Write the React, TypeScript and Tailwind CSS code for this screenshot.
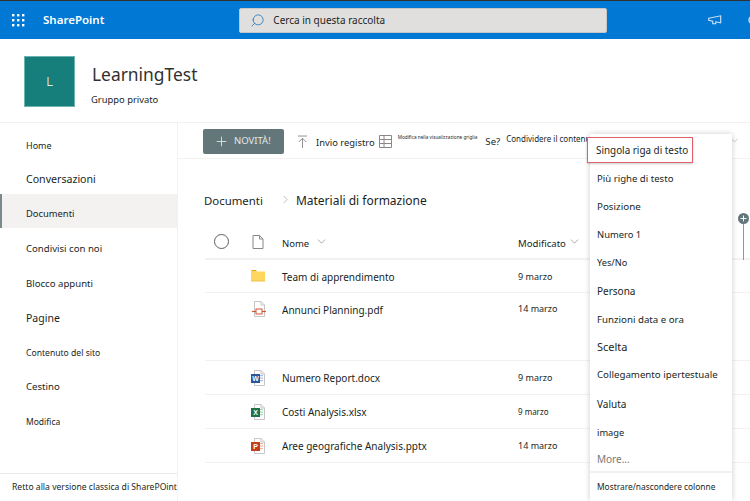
import { ChevronDown, ChevronRight, Plus, Search } from 'lucide-react';

const font = { fontFamily: '"Noto Sans", "Open Sans", sans-serif' };

const navItems = [
  { label: 'Home', size: 'text-[9px]', h: 'h-[34px]' },
  { label: 'Conversazioni', size: 'text-[10.6px]', h: 'h-[34px]' },
  { label: 'Documenti', size: 'text-[9.4px]', h: 'h-[34px]', active: true },
  { label: 'Condivisi con noi', size: 'text-[9.6px]', h: 'h-[36px]' },
  { label: 'Blocco appunti', size: 'text-[9.6px]', h: 'h-[34px]' },
  { label: 'Pagine', size: 'text-[10.5px]', h: 'h-[35px]' },
  { label: 'Contenuto del sito', size: 'text-[8.6px]', h: 'h-[35px]' },
  { label: 'Cestino', size: 'text-[9.6px]', h: 'h-[33px]' },
  { label: 'Modifica', size: 'text-[8.5px]', h: 'h-[37px]' },
];

const menuItems = [
  { label: 'Più righe di testo', size: 'text-[9.6px]', h: 'h-[28px]' },
  { label: 'Posizione', size: 'text-[9.8px]', h: 'h-[28px]' },
  { label: 'Numero 1', size: 'text-[9.4px]', h: 'h-[28px]' },
  { label: 'Yes/No', size: 'text-[9.2px]', h: 'h-[28px]' },
  { label: 'Persona', size: 'text-[10px]', h: 'h-[29px]' },
  { label: 'Funzioni data e ora', size: 'text-[9.7px]', h: 'h-[28px]' },
  { label: 'Scelta', size: 'text-[11px]', h: 'h-[27px]' },
  { label: 'Collegamento ipertestuale', size: 'text-[9.7px]', h: 'h-[29px]' },
  { label: 'Valuta', size: 'text-[10px]', h: 'h-[28px]' },
  { label: 'image', size: 'text-[9.3px]', h: 'h-[30px]' },
];

function AppGrid() {
  const dots = [];
  for (let y = 0; y < 3; y++) {
    for (let x = 0; x < 3; x++) {
      dots.push(<rect key={`${x}-${y}`} x={x * 5} y={y * 5} width="2.4" height="2.4" fill="#fff" />);
    }
  }
  return (
    <svg width="13" height="13" viewBox="0 0 13 13">
      {dots}
    </svg>
  );
}

function FolderIcon() {
  return (
    <svg width="14" height="12" viewBox="0 0 14 12">
      <path d="M0 1.5C0 .7.5 0 1.2 0h3.6l1.4 1.5H0z" fill="#e8a800" />
      <rect x="0" y="1.5" width="14" height="9.5" fill="#ffd75e" />
      <rect x="0" y="10.5" width="14" height="1" fill="#f2c04a" />
    </svg>
  );
}

function FileShape({ children }: { children?: React.ReactNode }) {
  return (
    <svg className="translate-x-[1px]" width="16" height="16" viewBox="0 0 16 16">
      <path d="M3.5 .5h6.5l3.5 3.5v11.5h-10z" fill="#fff" stroke="#c8c6c4" />
      <path d="M10 .5v3.5h3.5" fill="none" stroke="#c8c6c4" />
      {children}
    </svg>
  );
}

function PdfIcon() {
  return (
    <FileShape>
      <path d="M1 10.5h14" stroke="#d65532" strokeWidth="1.2" />
      <rect x="5" y="8" width="6" height="5" fill="#fff" stroke="#d65532" />
    </FileShape>
  );
}

function OfficeIcon({ color, bars, letter }: { color: string; bars: string; letter: string }) {
  return (
    <FileShape>
      <rect x="9" y="5" width="3" height="1.2" fill={bars} />
      <rect x="9" y="7.5" width="3" height="1.2" fill={bars} />
      <rect x="9" y="10" width="3" height="1.2" fill={bars} />
      <rect x="0" y="4" width="9" height="9" fill={color} />
      <text x="4.5" y="11" textAnchor="middle" fontSize="7" fontWeight="700" fill="#fff" fontFamily="Liberation Sans, sans-serif">
        {letter}
      </text>
    </FileShape>
  );
}

function Row({ h, icon, name, date, nameSize = 'text-[10px]', dateSize = 'text-[9px]', pt = 'items-center' }: {
  h: string; icon: React.ReactNode; name: string; date: string; nameSize?: string; dateSize?: string; pt?: string;
}) {
  return (
    <div className={`${h} flex ${pt} border-b border-[#f3f2f1]`}>
      <div className="w-[38px] shrink-0" />
      <div className="w-[39px] shrink-0 pr-[9px] flex justify-center">{icon}</div>
      <div className={`w-[236px] shrink-0 pt-[2px] text-[#201f1e] ${nameSize}`}>{name}</div>
      <div className={`pt-[1px] text-[#201f1e] ${dateSize}`}>{date}</div>
    </div>
  );
}

export default function App() {
  return (
    <div className="relative w-[750px] h-[501px] overflow-hidden bg-white text-[#201f1e]" style={font}>
      {/* suite bar */}
      <div className="h-[39px] bg-[#0078d4] border-t border-[#323130] flex items-center relative">
        <div className="w-[43px] pl-[12px] flex items-center"><AppGrid /></div>
        <span className="text-white text-[11.5px] font-semibold">SharePoint</span>
        <div className="ml-[135px] w-[368px] h-[25px] bg-[#e1dfdd] rounded-[2px] border border-[#c8c6c4] flex items-center pl-[10px] gap-[8px]">
          <Search size={15} strokeWidth={1.2} className="text-[#106ebe] -scale-x-100" />
          <span className="text-[10px] text-[#201f1e]">Cerca in questa raccolta</span>
        </div>
        <div className="absolute left-[708px] top-[14px]">
          <svg width="14" height="10" viewBox="0 0 14 10" fill="none" stroke="#cfe4f7" strokeWidth="1.1">
            <path d="M.7 3.2l12-2.4v7l-5-1v2h-3v-2.6L.7 5.2z" />
          </svg>
        </div>
        <div className="absolute left-[746px] top-[12px]">
          <svg width="14" height="14" viewBox="0 0 14 14" fill="none" stroke="#cfe4f7" strokeWidth="1.4">
            <circle cx="7" cy="7" r="4" />
          </svg>
        </div>
      </div>

      {/* site header */}
      <div className="h-[84px] flex items-start border-b border-[#f3f2f1]">
        <div className="ml-[24px] mt-[17px] w-[51px] h-[51px] bg-[#167f7b] border border-[#6eb3b0] flex items-center justify-center text-white text-[13px] font-light">
          L
        </div>
        <div className="ml-[17px] mt-[23px]">
          <div className="text-[17.4px] leading-[24px] text-[#323130]">LearningTest</div>
          <div className="text-[9.4px] mt-[7px] leading-[13px] -ml-[1px]">Gruppo privato</div>
        </div>
      </div>

      <div className="flex h-[378px]">
        {/* left nav */}
        <div className="w-[178px] shrink-0 border-r border-[#f3f2f1] flex flex-col pt-[3px]">
          {navItems.map((item) => (
            <div
              key={item.label}
              className={`${item.h} flex items-center pt-[6px] ${item.size} ${item.active ? 'bg-[#f3f2f1] border-l-2 border-[#7a8a8c] pl-[24px]' : 'pl-[26px]'}`}
            >
              {item.label}
            </div>
          ))}
          <div className="mt-auto h-[28px] border-t border-[#edebe9] flex items-center pl-[12px] text-[8.6px] whitespace-nowrap">
            Retto alla versione classica di SharePOint
          </div>
        </div>

        {/* main */}
        <div className="flex-1 min-w-0">
          {/* command bar */}
          <div className="h-[36px] pt-[2px] border-b border-[#f3f2f1] flex items-center pl-[25px] whitespace-nowrap">
            <div className="w-[81px] h-[25px] bg-[#63777b] rounded-[2px] flex items-center pl-[11px] gap-[5px] text-[#e4e8e8] text-[9.5px]">
              <Plus size={15} strokeWidth={1.4} />
              <span>NOVITÀ!</span>
            </div>
            <svg className="ml-[13px]" width="11" height="14" viewBox="0 0 12 15" fill="none" stroke="#8a8886" strokeWidth="1">
              <path d="M1 1h10M6 14V3.5M2 7.5l4-4 4 4" />
            </svg>
            <span className="ml-[8px] text-[9.4px] translate-y-[2px]">Invio registro</span>
            <svg className="ml-[4px]" width="13" height="13" viewBox="0 0 13 13" fill="none" stroke="#8a8886" strokeWidth="1">
              <path d="M.5.5h12v12H.5zM.5 4.5h12M.5 8.5h12M5 .5v12" />
            </svg>
            <span className="ml-[6px] text-[4.7px] -translate-y-[4px]">Modifica nella visualizzazione griglia</span>
            <span className="ml-[8px] text-[9.6px] translate-y-[1px]">Se?</span>
            <span className="ml-[6px] text-[8px] -translate-y-[3px]">Condividere il contenuto</span>
          </div>

          {/* breadcrumb */}
          <div className="h-[66px] flex items-center pl-[26px] pt-[18px]">
            <span className="text-[11.4px]">Documenti</span>
            <ChevronRight size={13} strokeWidth={1} className="ml-[16px] text-[#8a8886] -translate-y-[2px]" />
            <span className="ml-[4px] text-[12px]">Materiali di formazione</span>
          </div>

          {/* list */}
          <div className="ml-[27px] w-[545px]">
            <div className="h-[35px] flex items-center border-b-2 border-[#f3f2f1]">
              <div className="w-[38px] shrink-0 pl-[9px]">
                <div className="w-[15px] h-[15px] rounded-full border border-[#605e5c]" />
              </div>
              <div className="w-[39px] shrink-0 pr-[9px] flex justify-center">
                <svg width="12" height="14" viewBox="0 0 12 14" fill="none" stroke="#8a8886" strokeWidth="1">
                  <path d="M1 .5h6.5L11 4v9.5H1zM7.5.5V4H11" />
                </svg>
              </div>
              <div className="w-[236px] shrink-0 flex items-center gap-[6px] text-[9.5px] pt-[5px]">
                Nome <ChevronDown size={13} strokeWidth={1} className="text-[#605e5c] -translate-y-[3px]" />
              </div>
              <div className="flex items-center gap-[2px] text-[9.6px] pt-[5px]">
                Modificato <ChevronDown size={13} strokeWidth={1} className="text-[#605e5c] -translate-y-[2px]" />
              </div>
            </div>
            <Row h="h-[33px]" icon={<FolderIcon />} name="Team di apprendimento" date="9 marzo" />
            <Row h="h-[68px]" pt="items-start pt-[8px]" icon={<PdfIcon />} name="Annunci Planning.pdf" date="14 marzo" />
            <Row h="h-[34px]" icon={<OfficeIcon color="#2b579a" bars="#a6c2e8" letter="W" />} name="Numero Report.docx" date="9 marzo" />
            <Row h="h-[34px]" icon={<OfficeIcon color="#217346" bars="#a6d8ba" letter="X" />} name="Costi Analysis.xlsx" date="9 marzo" dateSize="text-[8px]" />
            <Row h="h-[34px]" icon={<OfficeIcon color="#c43e1c" bars="#f2b8a6" letter="P" />} name="Aree geografiche Analysis.pptx" date="14 marzo" />
          </div>
        </div>
      </div>

      {/* column insert marker */}
      <div className="absolute left-[738px] top-[213px] w-[11px] h-[11px] rounded-full bg-[#63777b] text-white flex items-center justify-center">
        <Plus size={9} strokeWidth={2.5} />
      </div>
      <div className="absolute left-[743px] top-[224px] w-px h-[36px] bg-[#8a9a9c]" />
      <ChevronDown size={11} strokeWidth={1} className="absolute left-[729px] top-[135px] text-[#8a8886]" />

      {/* new column menu */}
      <div className="absolute left-[590px] top-[134px] w-[142px] h-[367px] bg-white shadow-[0_0_6px_rgba(0,0,0,0.2)] flex flex-col">
        <div className="absolute -left-[3px] top-[3px] w-[106px] h-[26px] border-[1.5px] border-[#e0606a] bg-white shadow-[0_1px_2px_rgba(0,0,0,0.2)] flex items-center pl-[8px] text-[9.9px] whitespace-nowrap">
          Singola riga di testo
        </div>
        <div className="h-[31px] shrink-0" />
        {menuItems.map((item) => (
          <div key={item.label} className={`${item.h} shrink-0 flex items-center pl-[7px] whitespace-nowrap ${item.size}`}>
            {item.label}
          </div>
        ))}
        <div className="h-[23px] shrink-0 flex items-center pl-[7px] text-[10px] text-[#7a7876]">More...</div>
        <div className="border-t-2 border-[#f3f2f1] h-[30px] flex items-center pl-[7px] text-[8.4px] whitespace-nowrap">
          Mostrare/nascondere colonne
        </div>
      </div>
    </div>
  );
}
